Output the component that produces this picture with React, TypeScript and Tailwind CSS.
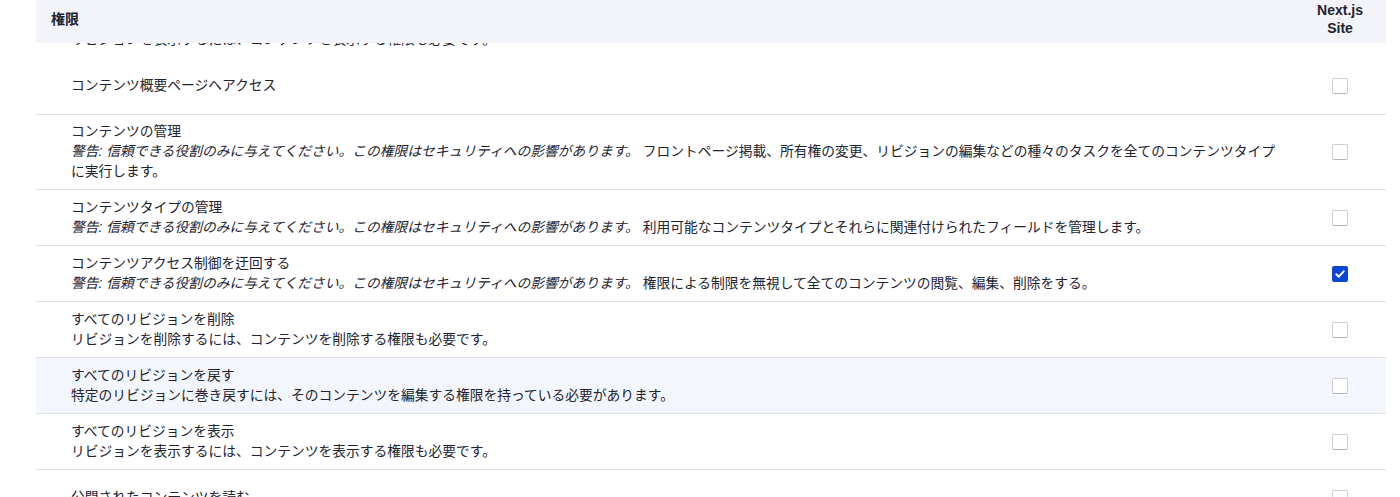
import { ReactNode } from "react";

type Perm = {
  title: string;
  warn?: boolean;
  desc?: ReactNode;
  checked?: boolean;
  hover?: boolean;
};

const WARNING =
  "警告: 信頼できる役割のみに与えてください。この権限はセキュリティへの影響があります。";

const perms: Perm[] = [
  {
    title: "コンテンツのリビジョンを表示",
    desc: "リビジョンを表示するには、コンテンツを表示する権限も必要です。",
  },
  { title: "コンテンツ概要ページへアクセス" },
  {
    title: "コンテンツの管理",
    warn: true,
    desc: "フロントページ掲載、所有権の変更、リビジョンの編集などの種々のタスクを全てのコンテンツタイプに実行します。",
  },
  {
    title: "コンテンツタイプの管理",
    warn: true,
    desc: "利用可能なコンテンツタイプとそれらに関連付けられたフィールドを管理します。",
  },
  {
    title: "コンテンツアクセス制御を迂回する",
    warn: true,
    desc: "権限による制限を無視して全てのコンテンツの閲覧、編集、削除をする。",
    checked: true,
  },
  {
    title: "すべてのリビジョンを削除",
    desc: "リビジョンを削除するには、コンテンツを削除する権限も必要です。",
  },
  {
    title: "すべてのリビジョンを戻す",
    desc: "特定のリビジョンに巻き戻すには、そのコンテンツを編集する権限を持っている必要があります。",
    hover: true,
  },
  {
    title: "すべてのリビジョンを表示",
    desc: "リビジョンを表示するには、コンテンツを表示する権限も必要です。",
  },
  { title: "公開されたコンテンツを読む" },
];

function Checkbox({ checked }: { checked?: boolean }) {
  if (checked) {
    return (
      <span className="flex h-[16px] w-[16px] items-center justify-center rounded-[2px] bg-[#0b46d2]">
        <svg width="12" height="12" viewBox="0 0 12 12" fill="none">
          <path
            d="M2.3 6.3l2.5 2.4 4.9-5.4"
            stroke="white"
            strokeWidth="2"
            strokeLinecap="round"
            strokeLinejoin="round"
          />
        </svg>
      </span>
    );
  }
  return (
    <span className="block h-[16px] w-[16px] rounded-[2px] border border-[#cfcfd3] border-b-[#b5b5ba] bg-white" />
  );
}

export default function App() {
  return (
    <div className="h-[497px] w-[1400px] overflow-hidden bg-white font-[family-name:'Liberation_Sans','Noto_Sans_CJK_JP',sans-serif] text-[#222330]">
      <div className="ml-[36px] w-[1350px]">
        {/* sticky header */}
        <div className="flex h-[43px] bg-[#f3f4f9] text-[14px] font-bold leading-[18px]">
          <div className="flex-1 pl-[15px] pt-[10px]">権限</div>
          <div className="w-[92px] pt-[1px] text-center">
            Next.js
            <br />
            Site
          </div>
        </div>

        {/* rows scrolled under the header */}
        <div className="h-[454px] overflow-hidden">
          <div className="-mt-[40.5px]">
            {perms.map((p, i) => (
              <div
                key={`perm-${i}`}
                className={`flex min-h-[56px] border-b ${
                  i === 0 ? "border-transparent" : "border-[#dfe0e5]"
                } ${p.hover ? "bg-[#f3f6fd]" : "bg-white"}`}
              >
                <div className="flex flex-1 flex-col justify-center py-[7px] pl-[35px] pr-[12px] text-[13.75px] leading-[20.25px]">
                  <div>{p.title}</div>
                  {(p.desc || p.warn) && (
                    <div>
                      {p.warn && <em>{WARNING}</em>}
                      {p.warn && " "}
                      {p.desc}
                    </div>
                  )}
                </div>
                <div className="flex w-[92px] items-center justify-center">
                  <Checkbox checked={p.checked} />
                </div>
              </div>
            ))}
          </div>
        </div>
      </div>
    </div>
  );
}
